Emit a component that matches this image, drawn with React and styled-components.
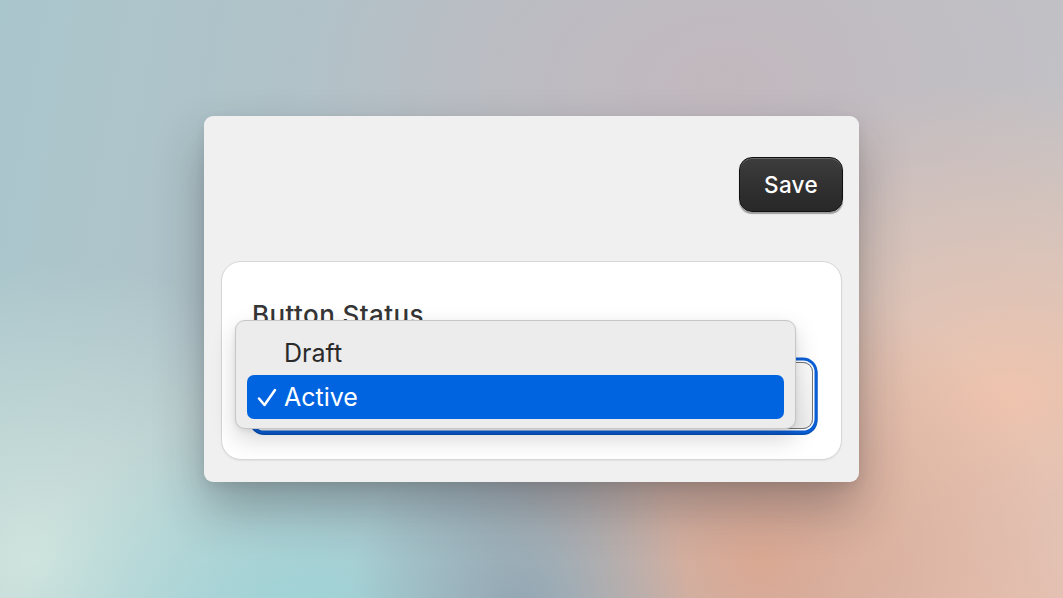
import React from "react";
import styled, { createGlobalStyle } from "styled-components";

const Global = createGlobalStyle`
  html, body { margin: 0; padding: 0; }
  body {
    font-family: Inter, "Noto Sans", "Liberation Sans", sans-serif;
    -webkit-font-smoothing: antialiased;
  }
`;

const Desktop = styled.div`
  width: 1063px;
  height: 598px;
  display: flex;
  align-items: center;
  justify-content: center;
  overflow: hidden;
  background:
    radial-gradient(ellipse 170px 200px at 520px 610px, rgba(145, 165, 178, 0.95), rgba(145, 165, 178, 0) 100%),
    radial-gradient(ellipse 300px 230px at 310px 630px, rgba(156, 212, 216, 1), rgba(156, 212, 216, 0) 100%),
    radial-gradient(ellipse 300px 280px at 760px 560px, rgba(218, 166, 144, 0.95), rgba(218, 166, 144, 0) 100%),
    radial-gradient(ellipse 320px 260px at 1020px 620px, rgba(230, 192, 176, 1), rgba(230, 192, 176, 0) 100%),
    radial-gradient(ellipse 460px 320px at 1010px 400px, rgba(242, 196, 172, 0.95), rgba(242, 196, 172, 0) 100%),
    radial-gradient(ellipse 360px 300px at 40px 560px, rgba(208, 228, 222, 1), rgba(208, 228, 222, 0) 100%),
    radial-gradient(ellipse 420px 260px at 720px 80px, rgba(196, 182, 188, 0.8), rgba(196, 182, 188, 0) 100%),
    linear-gradient(100deg, #a9c6cc 0%, #b6c0c6 45%, #c3c3c7 100%);
`;

const Window = styled.div`
  width: 655px;
  height: 366px;
  box-sizing: border-box;
  background: #f0f0f0;
  border-radius: 9px;
  box-shadow: 0 26px 50px rgba(30, 30, 40, 0.32), 0 4px 12px rgba(0, 0, 0, 0.08);
  padding: 41px 16px 22px 17px;
  display: flex;
  flex-direction: column;
`;

const Toolbar = styled.div`
  display: flex;
  justify-content: flex-end;
  height: 104px;
`;

const SaveButton = styled.button`
  width: 104px;
  height: 55px;
  box-sizing: border-box;
  border-radius: 13px;
  border: 1.5px solid #101010;
  background: linear-gradient(180deg, #3d3d3d 0%, #2f2f2f 60%, #282828 100%);
  box-shadow: inset 0 1px 0 rgba(255, 255, 255, 0.22), 0 1.5px 1px rgba(0, 0, 0, 0.35);
  color: #ffffff;
  font-family: Inter, "Noto Sans", sans-serif;
  font-size: 22.5px;
  font-weight: 500;
  letter-spacing: 0.3px;
  padding: 0 0 1px;
  cursor: default;
`;

const Card = styled.div`
  flex: 1;
  margin-right: 1px;
  box-sizing: border-box;
  background: #ffffff;
  border: 1px solid #d7d7d7;
  border-radius: 20px;
  box-shadow: 0 1px 2px rgba(0, 0, 0, 0.06);
  padding: 37px 28px 25px 30px;
  display: flex;
  flex-direction: column;
`;

const Label = styled.div`
  font-size: 26px;
  font-weight: 500;
  color: #363636;
  line-height: 32px;
  letter-spacing: 0.4px;
`;

const Field = styled.div`
  position: relative;
  margin-top: 31px;
  margin-left: 2px;
`;

const SelectBox = styled.div`
  height: 67px;
  box-sizing: border-box;
  border-radius: 10px;
  border: 1.5px solid #767676;
  background: linear-gradient(180deg, #fbfbfb 0%, #efefef 100%);
  box-shadow: 0 0 0 1.5px #ffffff, 0 0 0 4.5px #0a5fd6, 0 1.5px 0 4.5px #0650b8;
`;

const Menu = styled.div`
  position: absolute;
  left: -19px;
  top: -42px;
  width: 561px;
  box-sizing: border-box;
  padding: 10px 11px 9px;
  background: #ececec;
  border: 1px solid #c6c6c6;
  border-radius: 10px;
  box-shadow: 0 10px 24px rgba(0, 0, 0, 0.16), 0 2px 5px rgba(0, 0, 0, 0.08);
  display: flex;
  flex-direction: column;
`;

const Item = styled.div`
  height: 44px;
  border-radius: 7px;
  display: flex;
  align-items: center;
  padding-left: 37px;
  position: relative;
  font-size: 25px;
  font-weight: 400;
  color: ${(p) => (p.$selected ? "#ffffff" : "#2a2a2a")};
  background: ${(p) => (p.$selected ? "#0064e1" : "transparent")};
`;

const Check = styled.svg`
  position: absolute;
  left: 10px;
  top: 13px;
  width: 20px;
  height: 19px;
`;

export default function App() {
  return (
    <>
      <Global />
      <Desktop>
        <Window>
          <Toolbar>
            <SaveButton>Save</SaveButton>
          </Toolbar>
          <Card>
            <Label>Button Status</Label>
            <Field>
              <SelectBox />
              <Menu>
                <Item>Draft</Item>
                <Item $selected>
                  <Check viewBox="0 0 20 19" fill="none">
                    <path d="M2 10.5 L7.5 17 L18 2" stroke="#ffffff" strokeWidth="2.5" strokeLinecap="round" strokeLinejoin="round" />
                  </Check>
                  Active
                </Item>
              </Menu>
            </Field>
          </Card>
        </Window>
      </Desktop>
    </>
  );
}
